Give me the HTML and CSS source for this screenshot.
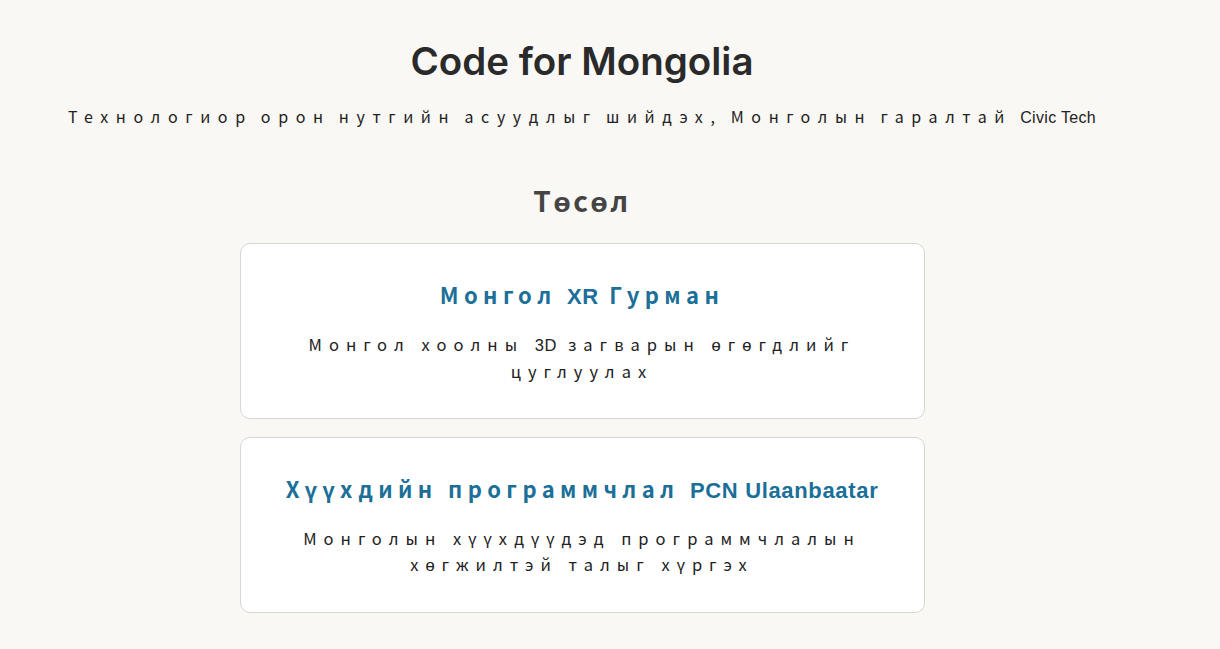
FILE: index.html
```html
<!DOCTYPE html>
<html>

<head>
    <meta charset="utf-8">
    <link rel="stylesheet" href="styles.css">
</head>

<body>

    <div class="page">
        <header class="intro">
            <h1>Code for Mongolia</h1>
            <p class="tagline">Технологиор орон нутгийн асуудлыг шийдэх, Монголын гаралтай <span class="latin">Civic Tech</span></p>
        </header>

        <section class="projects">
            <h2>Төсөл</h2>

            <div class="card">
                <h3>Монгол <span class="latin">XR</span> Гурман</h3>
                <p>Монгол хоолны <span class="latin">3D</span> загварын өгөгдлийг цуглуулах</p>
            </div>

            <div class="card">
                <h3>Хүүхдийн программчлал <span class="latin">PCN Ulaanbaatar</span></h3>
                <p>Монголын хүүхдүүдэд программчлалын хөгжилтэй талыг хүргэх</p>
            </div>
        </section>
    </div>

</body>

</html>
```

FILE: styles.css
```css
body {
    margin: 0;
    background-color: #f9f8f5;
    color: #222;
    font-family: "Noto Sans CJK JP", "Liberation Sans", sans-serif;
}

.page {
    width: 1164px;
    padding-top: 38px;
}

.intro {
    text-align: center;
}

h1 {
    margin: 0;
    font-family: Inter, "Liberation Sans", sans-serif;
    font-size: 38.5px;
    line-height: 46px;
    font-weight: 600;
    color: #2a2a2a;
}

.tagline {
    margin: 20px 0 0;
    font-size: 16px;
    line-height: 24px;
    letter-spacing: 7.6px;
    word-spacing: -3px;
    color: #222;
}

.latin {
    font-family: "Liberation Sans", Arial, sans-serif;
    letter-spacing: 0.02em;
    word-spacing: 0;
}

.projects {
    display: flex;
    flex-direction: column;
    align-items: center;
    gap: 18px;
    margin-top: 52px;
}

h2 {
    margin: 0 0 7px;
    font-size: 28px;
    line-height: 36px;
    font-weight: bold;
    letter-spacing: 2.6px;
    color: #444;
}

.card {
    box-sizing: border-box;
    width: 685px;
    height: 176px;
    padding: 35px 30px 0;
    background-color: #fff;
    border: 1px solid #d6d6d6;
    border-radius: 10px;
    text-align: center;
}

.card h3 {
    margin: 0;
    font-size: 22px;
    line-height: 30px;
    font-weight: bold;
    letter-spacing: 5.4px;
    color: #1b6f98;
}

.card h3 .latin {
    letter-spacing: 0.03em;
}

.card p {
    margin: 19px auto 0;
    max-width: 620px;
    font-size: 16.5px;
    line-height: 26px;
    letter-spacing: 7px;
    color: #222;
}

.card p .latin {
    letter-spacing: 0.04em;
}
```
